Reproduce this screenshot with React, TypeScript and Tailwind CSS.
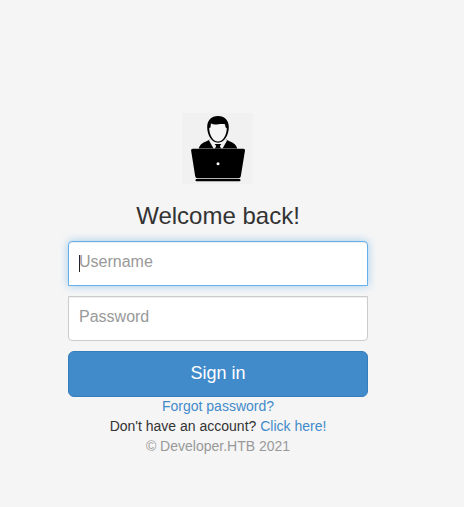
function UserAtLaptop() {
  return (
    <svg className="h-[71px] w-[71px] bg-[#f1f1f1]" viewBox="182 113 71 71" aria-hidden="true">
      <path d="M198.800 148.500c1-4 3.900-5.800 7.200-7l4-2h16l4 2c3.200 1.200 6.200 3 7.200 7z" fill="#000" />
      <path d="M210.500 139l-1.500 1.500 4.500 8h9l4.500-8-1.500-1.500z" fill="#f1f1f1" />
      <path d="M214.700 144h6.600l-1.500 2 1.300 2.500h-6.200l1.300-2.500z" fill="#000" />
      <path d="M218 116c-6.700 0-10.800 4.300-10.800 11.300 0 8.200 4.700 15.400 10.800 15.400s10.800-7.200 10.800-15.400c0-7-4.100-11.300-10.800-11.300z" fill="#000" />
      <path d="M210.900 123.600c2.600 1.200 5 .9 7.500.6 2.600-.3 4.600-.3 6.600.1l.6 3.200 1.200.5c-.2 7.300-3.900 13.500-8.800 13.500s-8.600-6.200-8.800-13.500l1.300-.6z" fill="#f5f5f5" />
      <path d="M192.800 148.700h50.600q1.900 0 1.600 1.900l-4.200 25.700q-.3 1.900-2.200 1.900h-41.200q-1.900 0-2.200-1.900l-4.100-25.700q-.3-1.900 1.700-1.900z" fill="#000" />
      <rect x="195.500" y="179" width="45" height="2.200" rx=".9" fill="#000" />
      <circle cx="218" cy="163.700" r="1.500" fill="#fff" />
    </svg>
  );
}

export default function App() {
  return (
    <main className="flex h-[507px] w-[464px] flex-col items-start bg-[#f5f5f5] pl-[68px] pt-[113px] font-['Liberation_Sans',Arial,sans-serif] text-sm text-[#333]">
      <form className="flex w-[300px] flex-col items-center" onSubmit={(e) => e.preventDefault()}>
        <div className="mr-px">
          <UserAtLaptop />
        </div>
        <h1 className="mb-[11px] mt-[18px] text-2xl leading-[28px]">Welcome back!</h1>
        <div className="flex h-[45px] w-full items-center rounded-t border border-[#66afe9] bg-white px-[10px] pb-[4px] text-base text-[#999] shadow-[inset_0_1px_1px_rgba(0,0,0,0.075),0_0_8px_rgba(102,175,233,0.6)]">
          <span className="mt-[3px] h-[17px] w-px bg-[#222]" />
          <span className="-ml-px">Username</span>
        </div>
        <div className="mt-[10px] flex h-[45px] w-full items-center rounded-b border border-[#ccc] bg-white px-[10px] pb-[4px] text-base text-[#999] shadow-[inset_0_1px_1px_rgba(0,0,0,0.075)]">
          Password
        </div>
        <button type="submit" className="mb-[-1px] mt-[10px] h-[46px] w-full rounded-md border border-[#357ebd] bg-[#428bca] pb-[2px] text-lg text-white">
          Sign in
        </button>
        <a className="leading-5 text-[#428bca]">Forgot password?</a>
        <p className="leading-5">
          Don't have an account? <a className="text-[#428bca]">Click here!</a>
        </p>
        <p className="leading-5 text-[#999]">© Developer.HTB 2021</p>
      </form>
    </main>
  );
}
